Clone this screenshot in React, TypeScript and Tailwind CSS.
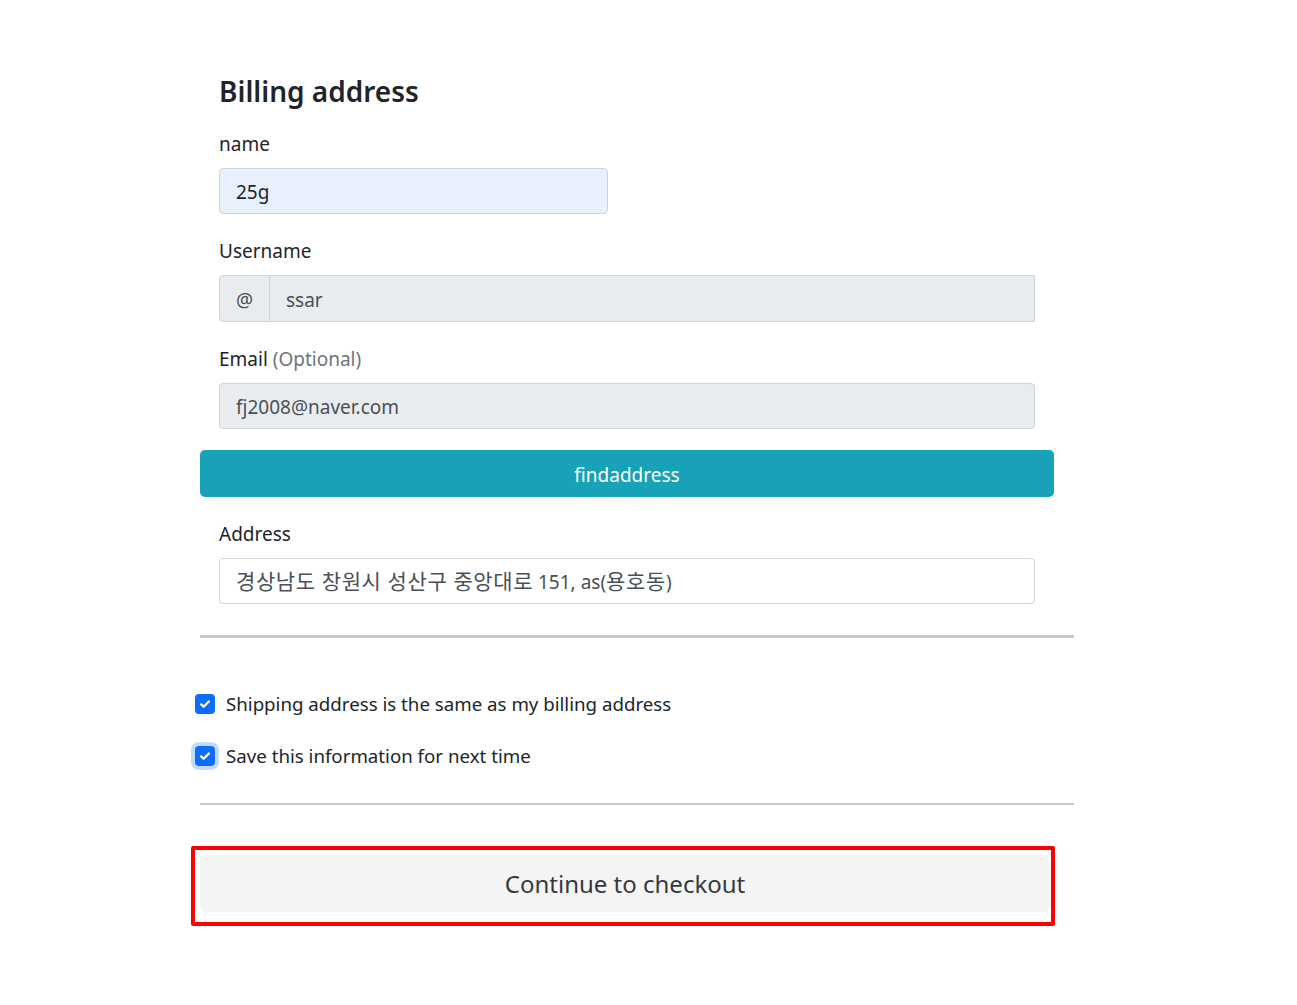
import React from "react";

const font = { fontFamily: '"Noto Sans", "Noto Sans CJK KR", sans-serif' };

function Label({ children }: { children: React.ReactNode }) {
  return <label className="block h-[28px] leading-[28px] text-[19px] text-[#212529]">{children}</label>;
}

function CheckIcon() {
  return (
    <svg viewBox="0 0 20 20" className="w-[14px] h-[14px]" fill="none">
      <path d="M4.5 10.5l3.6 3.4L15.5 6.5" stroke="#fff" strokeWidth="3.2" strokeLinecap="round" strokeLinejoin="round" />
    </svg>
  );
}

function Check({ label, focused }: { label: string; focused?: boolean }) {
  return (
    <div className="flex items-center h-[28px] -ml-[5px]">
      <span
        className={
          "w-[20px] h-[20px] rounded-[4px] bg-[#0d6efd] flex items-center justify-center shrink-0 " +
          (focused ? "ring-4 ring-[#c2dbfe]" : "")
        }
      >
        <CheckIcon />
      </span>
      <span className="ml-[11px] text-[18.7px] text-[#212529]">{label}</span>
    </div>
  );
}

export default function App() {
  return (
    <div className="min-h-screen bg-white" style={font}>
      <div className="pl-[200px] pt-[74px] pb-[80px]">
        <div className="w-[854px] px-[19px]">
          <h4 className="text-[28px] leading-[35px] font-semibold text-[#212529]">Billing address</h4>

          <div className="mt-[21px]">
            <Label>name</Label>
            <div className="mt-[10px] w-[389px] h-[46px] rounded-[4px] border border-[#ced4da] bg-[#e8f0fe] px-[16px] pt-[3px] flex items-center text-[19px] text-[#212529]">
              25g
            </div>
          </div>

          <div className="mt-[23px]">
            <Label>Username</Label>
            <div className="mt-[10px] h-[47px] flex border border-[#ced4da] rounded-l-[4px] bg-[#e9ecef] text-[19px]">
              <span className="w-[50px] pt-[3px] flex items-center justify-center border-r border-[#ced4da] text-[#495057]">@</span>
              <span className="flex-1 pt-[3px] flex items-center px-[16px] text-[#495057]">ssar</span>
            </div>
          </div>

          <div className="mt-[23px]">
            <Label>
              Email <span className="text-[#6c757d]">(Optional)</span>
            </Label>
            <div className="mt-[10px] h-[46px] rounded-[4px] border border-[#ced4da] bg-[#e9ecef] px-[16px] pt-[3px] flex items-center text-[19px] text-[#495057]">
              fj2008@naver.com
            </div>
          </div>
        </div>

        <button className="mt-[21px] w-[854px] h-[47px] pt-[3px] rounded-[5px] bg-[#17a2b8] text-white text-[19px] flex items-center justify-center">
          findaddress
        </button>

        <div className="w-[854px] px-[19px]">
          <div className="mt-[23px]">
            <Label>Address</Label>
            <div className="mt-[10px] h-[46px] rounded-[4px] border border-[#ced4da] bg-white px-[16px] pt-[2px] flex items-center text-[19px] text-[#495057]">
              <span className="text-[21px] tracking-[0.6px]">경상남도 창원시 성산구 중앙대로</span>
              <span>&nbsp;151, as(</span>
              <span className="text-[21px] tracking-[0.6px]">용호동</span>
              <span>)</span>
            </div>
          </div>
        </div>

        <hr className="mt-[31px] w-[874px] border-0 h-[3px] bg-[#c8c8c8]" />

        <div className="mt-[52px] flex flex-col gap-[24px]">
          <Check label="Shipping address is the same as my billing address" />
          <Check label="Save this information for next time" focused />
        </div>

        <hr className="mt-[33px] w-[874px] border-0 h-[2px] bg-[#c8c8c8]" />

        <div className="mt-[41px] -ml-[9px] w-[864px] h-[80px] border-4 border-[#ff0000] rounded-[2px] pt-[5px] pl-[5px] pr-[1px] pb-[10px]">
          <button className="w-full h-full rounded-[5px] bg-[#f4f4f4] text-[24px] text-[#343a40] flex items-center justify-center">
            Continue to checkout
          </button>
        </div>
      </div>
    </div>
  );
}
